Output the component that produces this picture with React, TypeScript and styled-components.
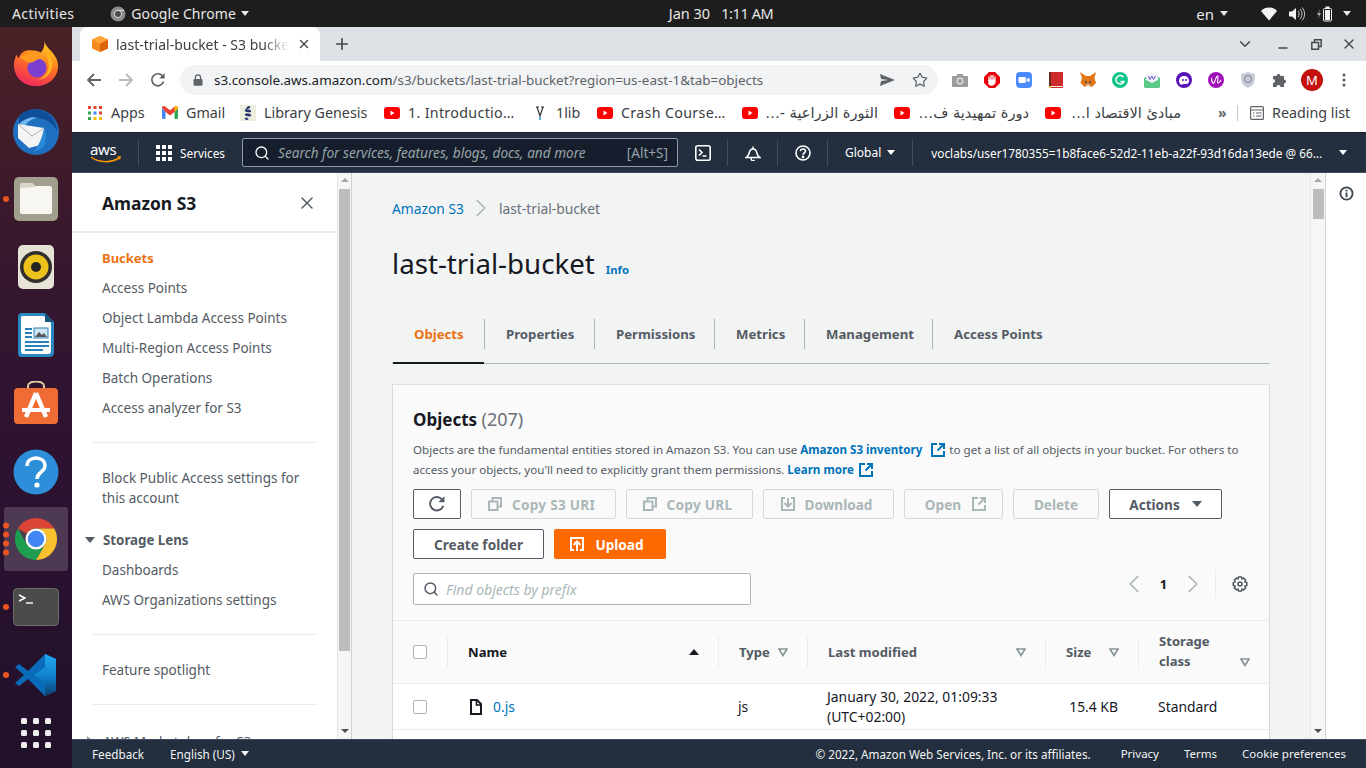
import React from 'react';
import styled, { createGlobalStyle } from 'styled-components';
import { ChevronDown, ChevronLeft, ChevronRight, Minus, Plus, Search, Star, X } from 'lucide-react';

const Global = createGlobalStyle`
  html, body { margin: 0; padding: 0; overflow: hidden; }
  body { font-family: "Noto Sans", "DejaVu Sans", sans-serif; }
  * { box-sizing: border-box; }
`;

const Screen = styled.div`
  width: 1366px;
  height: 768px;
  display: flex;
  flex-direction: column;
  overflow: hidden;
  background: #fff;
`;

/* ---------- gnome top bar ---------- */
const TopBar = styled.div`
  height: 27px;
  flex: none;
  background: #1d1d1d;
  color: #e8e8e8;
  font-size: 14px;
  display: grid;
  grid-template-columns: 1fr auto 1fr;
  align-items: center;
  padding: 0 12px;
`;
const TopLeft = styled.div`
  display: flex;
  align-items: center;
  letter-spacing: 0.1px;
`;
const Activities = styled.span`
  letter-spacing: 0.4px;
`;
const AppName = styled.div`
  display: flex;
  align-items: center;
  gap: 5px;
  margin-left: 36px;
`;
const TopCenter = styled.div`
  display: flex;
  gap: 11px;
  font-size: 14.5px;
  margin: -1px 0 0 76px;
`;
const ClockTime = styled.span`
  letter-spacing: -0.4px;
`;
const TopRight = styled.div`
  display: flex;
  align-items: center;
  justify-content: flex-end;
  margin-right: 3px;
`;
const EnLabel = styled.span`
  font-size: 15px;
`;
const Caret = styled.span<{ $size?: number; $color?: string; $dir?: 'up' | 'right' }>`
  display: inline-block;
  flex: none;
  width: 0;
  height: 0;
  border-left: ${(p) => p.$size ?? 4}px solid transparent;
  border-right: ${(p) => p.$size ?? 4}px solid transparent;
  border-top: ${(p) => (p.$size ?? 4) + 1}px solid ${(p) => p.$color ?? '#e8e8e8'};
  transform: ${(p) => (p.$dir === 'up' ? 'rotate(180deg)' : p.$dir === 'right' ? 'rotate(-90deg)' : 'none')};
`;
const Gap = styled.span<{ $w: number }>`
  width: ${(p) => p.$w}px;
  flex: none;
  display: inline-block;
`;

const Body = styled.div`
  flex: 1;
  display: flex;
  min-height: 0;
`;

/* ---------- ubuntu dock ---------- */
const Dock = styled.div`
  width: 72px;
  flex: none;
  background: linear-gradient(180deg, #4a2126 0%, #35162f 35%, #2a1230 65%, #22102a 100%);
  display: flex;
  flex-direction: column;
  align-items: center;
  padding-top: 2px;
`;
const DockSlot = styled.div<{ $active?: boolean; $h?: number }>`
  position: relative;
  width: 64px;
  height: ${(p) => p.$h ?? 68}px;
  flex: none;
  display: flex;
  align-items: center;
  justify-content: center;
  border-radius: 3px;
  background: ${(p) => (p.$active ? 'rgba(255,255,255,0.17)' : 'transparent')};
`;
const RunDots = styled.div`
  position: absolute;
  left: 0;
  top: 50%;
  transform: translateY(-50%);
  display: flex;
  flex-direction: column;
  gap: 3px;
  margin-left: -1px;
`;
const RunDot = styled.span`
  width: 6px;
  height: 6px;
  border-radius: 50%;
  background: #e95420;
`;

const Browser = styled.div`
  flex: 1;
  min-width: 0;
  display: flex;
  flex-direction: column;
`;

/* ---------- chrome ---------- */
const TabStrip = styled.div`
  height: 34px;
  flex: none;
  background: #dee1e6;
  display: flex;
  align-items: flex-end;
  padding-left: 8px;
  color: #45494e;
`;
const BrowserTab = styled.div`
  width: 240px;
  height: 34px;
  background: #fff;
  border-radius: 8px 8px 0 0;
  display: flex;
  align-items: center;
  padding: 0 9px 0 12px;
  gap: 8px;
`;
const TabTitle = styled.div`
  flex: 1;
  font-size: 14px;
  color: #3c4043;
  white-space: nowrap;
  overflow: hidden;
  -webkit-mask-image: linear-gradient(90deg, #000 85%, transparent 100%);
`;
const NewTab = styled.div`
  height: 34px;
  margin-left: 13px;
  display: flex;
  align-items: center;
`;
const WindowControls = styled.div`
  margin-left: auto;
  height: 34px;
  display: flex;
  align-items: center;
  margin-right: -2px;
`;
const WinBtn = styled.div<{ $w: number; $low?: boolean }>`
  width: ${(p) => p.$w}px;
  padding-top: ${(p) => (p.$low ? 8 : 0)}px;
  display: flex;
  justify-content: center;
  align-items: center;
`;
const Toolbar = styled.div`
  height: 36px;
  flex: none;
  background: #fff;
  display: flex;
  align-items: center;
  padding: 1px 0 0 6px;
`;
const NavBtn = styled.div`
  width: 32px;
  display: flex;
  justify-content: center;
  align-items: center;
`;
const Omnibox = styled.div`
  width: 758px;
  height: 30px;
  margin-left: 6px;
  background: #f1f3f4;
  border-radius: 15px;
  display: flex;
  align-items: center;
  padding: 0 2px 0 13px;
  font-size: 13.4px;
  color: #5f6368;
`;
const Host = styled.span`
  color: #202124;
  margin-left: 11px;
`;
const UrlRest = styled.span`
  flex: 1;
  white-space: nowrap;
`;
const OmniIcon = styled.span`
  width: 32px;
  display: flex;
  justify-content: center;
`;
const Extensions = styled.div`
  display: flex;
  margin-left: 6px;
`;
const ExtSlot = styled.div`
  width: 32px;
  display: flex;
  align-items: center;
  justify-content: center;
`;
const Avatar = styled.div`
  width: 22px;
  height: 22px;
  border-radius: 50%;
  background: #c5110e;
  color: #fff;
  font-size: 13px;
  display: flex;
  align-items: center;
  justify-content: center;
`;
const BookmarkBar = styled.div`
  height: 35px;
  flex: none;
  background: #fff;
  display: flex;
  align-items: center;
  padding: 0 0 4px 15px;
  font-size: 14.3px;
  color: #3c4043;
`;
const Bookmark = styled.div<{ $w: number }>`
  width: ${(p) => p.$w}px;
  flex: none;
  display: flex;
  align-items: center;
  gap: 8px;
  white-space: nowrap;
`;
const WideLabel = styled.span`
  letter-spacing: 0.3px;
`;
const ArabicLabel = styled.span<{ $w: number }>`
  width: ${(p) => p.$w}px;
  font-family: "DejaVu Sans", "Noto Sans", sans-serif;
  font-size: 14.6px;
  direction: rtl;
  text-align: right;
  overflow: hidden;
`;
const More = styled.div`
  width: 15px;
  margin-left: 37px;
  font-size: 14px;
  color: #5f6368;
  font-weight: 700;
`;
const BarSep = styled.div`
  width: 1px;
  height: 16px;
  background: #c6c8ca;
  margin: 0 12px 0 4px;
`;
const ReadingList = styled.div`
  display: flex;
  align-items: center;
  gap: 8px;
`;

/* ---------- aws console ---------- */
const AwsNav = styled.div`
  height: 41px;
  flex: none;
  background: #232f3e;
  border-top: 1px solid #1b2532;
  border-bottom: 1px solid #3c4a5b;
  display: flex;
  align-items: center;
  color: #fff;
  padding-left: 18px;
  font-size: 11.8px;
`;
const NavSep = styled.div<{ $l?: number; $r?: number }>`
  width: 1px;
  height: 26px;
  background: #414d5c;
  margin: 0 ${(p) => p.$r ?? 0}px 0 ${(p) => p.$l ?? 0}px;
`;
const ServicesBtn = styled.div`
  display: flex;
  align-items: center;
  gap: 8px;
`;
const NavSearch = styled.div`
  width: 436px;
  height: 29px;
  margin-left: 17px;
  background: #161e2d;
  border: 1px solid #8d9ba8;
  border-radius: 2px;
  display: flex;
  align-items: center;
  padding: 0 9px 0 11px;
  gap: 8px;
  color: #95a5a6;
  font-size: 13.6px;
`;
const NavSearchText = styled.span`
  flex: 1;
  font-style: italic;
  white-space: nowrap;
`;
const NavIcon = styled.div`
  width: 49px;
  display: flex;
  justify-content: center;
  align-items: center;
`;
const GlobalLabel = styled.span`
  font-size: 12px;
`;
const UserText = styled.div`
  width: 390px;
  white-space: nowrap;
  margin-left: 18px;
`;

const ConsoleArea = styled.div`
  flex: 1;
  display: flex;
  min-height: 0;
  background: #fff;
`;
const SideNav = styled.div`
  width: 265px;
  flex: none;
  overflow: hidden;
  background: #fff;
  color: #545b64;
  font-size: 13.5px;
`;
const SideHead = styled.div`
  height: 60px;
  border-bottom: 2px solid #eaeded;
  display: flex;
  align-items: center;
  justify-content: space-between;
  padding: 2px 20px 0 30px;
  margin-bottom: 10px;
`;
const SideTitle = styled.div`
  font-size: 17.4px;
  font-weight: 700;
  color: #16191f;
`;
const SideLink = styled.div<{ $active?: boolean }>`
  height: 30px;
  display: flex;
  align-items: center;
  padding-left: 30px;
  font-weight: ${(p) => (p.$active ? 700 : 400)};
  font-size: ${(p) => (p.$active ? 13 : 13.5)}px;
  color: ${(p) => (p.$active ? '#ec7211' : '#545b64')};
`;
const SideRule = styled.div<{ $t: number; $b: number }>`
  height: 1px;
  background: #eaeded;
  margin: ${(p) => p.$t}px 20px ${(p) => p.$b}px 20px;
`;
const SideBlock = styled.div`
  padding: 0 30px;
  line-height: 20px;
`;
const SideGroup = styled.div<{ $bold?: boolean }>`
  height: 31px;
  margin-top: 16px;
  display: flex;
  align-items: center;
  gap: 8px;
  padding-left: 13px;
  white-space: nowrap;
  font-size: 13.3px;
  font-weight: ${(p) => (p.$bold ? 700 : 400)};
`;
const ScrollTrack = styled.div<{ $w: number }>`
  width: ${(p) => p.$w}px;
  flex: none;
  background: #f5f6f6;
  border-left: 1px solid #e4e6e6;
  border-right: 1px solid #cfd2d2;
  display: flex;
  flex-direction: column;
  align-items: center;
  padding-top: 5px;
  position: relative;
`;
const ScrollUp = styled.span`
  width: 0;
  height: 0;
  border-left: 4px solid transparent;
  border-right: 4px solid transparent;
  border-bottom: 4px solid #a8a8a8;
`;
const ScrollDown = styled.span`
  position: absolute;
  bottom: 6px;
  left: 50%;
  margin-left: -4px;
  width: 0;
  height: 0;
  border-left: 4px solid transparent;
  border-right: 4px solid transparent;
  border-top: 4px solid #505050;
`;
const ScrollThumb = styled.div<{ $h: number }>`
  width: 11px;
  height: ${(p) => p.$h}px;
  background: #bdbdbd;
  margin-top: 7px;
`;

const Main = styled.div`
  flex: 1;
  min-width: 0;
  overflow: hidden;
  background: #f2f3f3;
  padding: 25px 40px 0 40px;
`;
const Crumbs = styled.div`
  display: flex;
  align-items: center;
  font-size: 13.8px;
  height: 20px;
  color: #687078;
`;
const CrumbArrow = styled(ChevronRight)`
  flex: none;
  margin: 0 3px 0 2px;
`;
const LinkText = styled.a`
  color: #0073bb;
  text-decoration: none;
`;
const PageHead = styled.div`
  display: flex;
  align-items: baseline;
  gap: 11px;
  margin-top: 24px;
  height: 43px;
`;
const PageTitle = styled.h1`
  margin: 0;
  font-size: 27.7px;
  font-weight: 400;
  color: #16191f;
  line-height: 42px;
`;
const InfoLink = styled.a`
  font-size: 11.3px;
  font-weight: 700;
  color: #0073bb;
`;
const TabList = styled.div`
  margin-top: 34px;
  height: 45px;
  display: flex;
  border-bottom: 1px solid #aab7b8;
  align-items: flex-start;
`;
const TabItem = styled.div<{ $active?: boolean; $first?: boolean; $w: number }>`
  width: ${(p) => p.$w}px;
  height: 45px;
  flex: none;
  font-size: 13.2px;
  font-weight: 700;
  white-space: nowrap;
  color: ${(p) => (p.$active ? '#ec7211' : '#545b64')};
  border-bottom: 2px solid ${(p) => (p.$active ? '#16191f' : 'transparent')};
  margin-left: ${(p) => (p.$first ? '1px' : '0')};
`;
const TabLabel = styled.div<{ $first?: boolean }>`
  height: 30px;
  display: flex;
  align-items: center;
  padding: 0 0 1px 21px;
  border-left: ${(p) => (p.$first ? 'none' : '1px solid #aab7b8')};
`;
const Card = styled.div`
  margin-top: 20px;
  background: #fafafa;
  border: 1px solid #e0e3e3;
  border-left-color: #d5dbdb;
  border-right-color: #d5dbdb;
  box-shadow: 0 1px 1px rgba(0, 59, 143, 0.1);
`;
const CardHead = styled.div`
  padding: 20px 20px 0 20px;
`;
const CardTitle = styled.div`
  font-size: 17px;
  line-height: 28px;
  font-weight: 700;
  color: #16191f;
`;
const Count = styled.span`
  font-weight: 400;
  font-size: 18px;
  color: #687078;
`;
const Desc = styled.div`
  margin-top: 6px;
  font-size: 11.6px;
  line-height: 20px;
  color: #545b64;
  margin-bottom: -1px;
`;
const DescLink = styled.a`
  color: #0073bb;
  font-weight: 700;
`;
const DescIcon = styled.span<{ $l: number }>`
  display: inline-flex;
  height: 14px;
  vertical-align: -3px;
  margin: 0 1px 0 ${(p) => p.$l}px;
`;
const BtnRow = styled.div`
  display: flex;
  gap: 10px;
  margin-top: 10px;
`;
const Btn = styled.div<{ $w: number; $off?: boolean; $primary?: boolean; $gap?: number; $ls?: number; $pl?: number; $pr?: number }>`
  width: ${(p) => p.$w}px;
  height: 30px;
  flex: none;
  display: flex;
  align-items: center;
  justify-content: center;
  gap: ${(p) => p.$gap ?? 10}px;
  font-size: 13.6px;
  font-weight: 700;
  letter-spacing: ${(p) => p.$ls ?? 0}px;
  border-radius: 2px;
  padding: 0 ${(p) => p.$pr ?? 0}px 0 ${(p) => p.$pl ?? 0}px;
  border: 1px solid ${(p) => (p.$primary ? '#ff6a00' : p.$off ? '#d5dbdb' : '#545b64')};
  background: ${(p) => (p.$primary ? '#ff6a00' : p.$off ? '#fafafa' : '#fff')};
  color: ${(p) => (p.$primary ? '#fff' : p.$off ? '#aab7b8' : '#545b64')};
`;
const FilterRow = styled.div`
  display: flex;
  align-items: center;
  justify-content: space-between;
  margin-top: 14px;
`;
const FilterBox = styled.div`
  width: 338px;
  height: 32px;
  background: #fff;
  border: 1px solid #aab7b8;
  border-radius: 2px;
  display: flex;
  align-items: center;
  gap: 7px;
  padding: 0 9px;
  font-size: 14px;
  font-style: italic;
  color: #aab7b8;
`;
const Pager = styled.div`
  display: flex;
  align-items: center;
  height: 30px;
  margin-top: -10px;
  margin-right: 1px;
`;
const PageNum = styled.div`
  width: 29px;
  text-align: center;
  font-size: 13px;
  font-weight: 700;
  color: #16191f;
`;
const PagerSep = styled.div`
  width: 1px;
  height: 30px;
  background: #eaeded;
  margin: 0 16px 0 7px;
`;
const ObjTable = styled.div`
  margin-top: 15px;
`;
const grid = '54px 271px 89px 238px 93px 1fr';
const HeadRow = styled.div`
  height: 64px;
  display: grid;
  grid-template-columns: ${grid};
  align-items: center;
  border-top: 1px solid #eaeded;
  border-bottom: 1px solid #eaeded;
  font-size: 13.1px;
  font-weight: 700;
  color: #545b64;
`;
const HeadCell = styled.div<{ $sorted?: boolean; $bottom?: boolean }>`
  height: 31px;
  border-left: 1px solid #eaeded;
  padding: 0 19px ${(p) => (p.$bottom ? 1 : 0)}px 20px;
  display: flex;
  align-items: ${(p) => (p.$bottom ? 'flex-end' : 'center')};
  justify-content: space-between;
  color: ${(p) => (p.$sorted ? '#16191f' : '#545b64')};
  gap: 6px;
`;
const CheckCell = styled.div`
  padding-left: 20px;
  display: flex;
  align-items: center;
`;
const CheckBox = styled.span`
  width: 14px;
  height: 14px;
  background: #fff;
  border: 1px solid #aab7b8;
  border-radius: 2px;
  display: block;
`;
const StorageHead = styled.div`
  line-height: 20px;
  margin-bottom: -4px;
`;
const DataRow = styled.div`
  height: 46px;
  display: grid;
  grid-template-columns: ${grid};
  align-items: center;
  background: #fff;
  border-bottom: 1px solid #eaeded;
  font-size: 13.9px;
  color: #16191f;
`;
const DataCell = styled.div<{ $right?: boolean; $l?: number }>`
  padding: 0 20px 0 ${(p) => p.$l ?? 20}px;
  line-height: 20px;
  display: flex;
  align-items: center;
  gap: 11px;
  white-space: nowrap;
  justify-content: ${(p) => (p.$right ? 'flex-end' : 'flex-start')};
`;
const DateText = styled.div`
  white-space: nowrap;
`;
const RowTail = styled.div`
  height: 40px;
  background: #fff;
`;
const InfoRail = styled.div`
  width: 40px;
  flex: none;
  background: #fff;
  display: flex;
  justify-content: center;
  padding-top: 13px;
`;
const Footer = styled.div`
  height: 29px;
  flex: none;
  background: #232f3e;
  border-top: 1px solid #3c4a5b;
  color: #f2f3f3;
  font-size: 11.7px;
  display: flex;
  align-items: center;
  padding: 0 20px 1px;
`;
const FooterLeft = styled.div`
  display: flex;
  align-items: center;
  gap: 26px;
  flex: 1;
`;
const Lang = styled.div`
  display: flex;
  align-items: center;
  gap: 6px;
`;
const FooterRight = styled.div`
  display: flex;
  gap: 25px;
  font-size: 11.5px;
`;
const Copyright = styled.span`
  margin-right: 5px;
  font-size: 11.7px;
`;

/* ---------- drawings ---------- */
const FirefoxIcon = () => (
  <svg width="46" height="46" viewBox="0 0 48 48">
    <defs>
      <linearGradient id="ff" x1="0.7" y1="0" x2="0.3" y2="1">
        <stop offset="0" stopColor="#ffd426" />
        <stop offset="0.45" stopColor="#ff7a1f" />
        <stop offset="1" stopColor="#f0255f" />
      </linearGradient>
    </defs>
    <path d="M33 1c1 6 5 8 9 13 3 4 5 8 5 13 0 12-10 21-23 21S1 39 1 26c0-4 1-8 3-11 0 2 1 3 2 4 1-4 4-7 8-8 6-1 11 0 15 2 3-3 4-7 4-12z" fill="url(#ff)" />
    <circle cx="25" cy="29" r="10" fill="#7b3fd0" />
    <path d="M7 18c5-3 10-6 17-4 4 1 7 3 8 7-4-3-8 0-11 2-3 1-6 1-8-1-2-1-4-2-6-4z" fill="#ff9a1f" />
    <path d="M33 10c6 4 9 11 8 18-1 7-7 13-15 14 6-3 11-8 11-15 0-6-1-12-4-17z" fill="#ffb31f" />
  </svg>
);
const ThunderbirdIcon = () => (
  <svg width="50" height="50" viewBox="0 0 50 50">
    <circle cx="25" cy="26" r="23" fill="#1f6fc0" />
    <path d="M8 10c8-9 24-9 32 0 4 5 6 10 6 15-5-8-11-13-21-13-7 0-12 3-17 9z" fill="#0f4f99" />
    <path d="M8 18c6-6 14-8 18-6-6 1-10 4-12 8z" fill="#6fb7ee" />
    <path d="M7 18l26 4v16L18 42 7 32z" fill="#f4f4f4" />
    <path d="M7 18l14 12 12-8" fill="none" stroke="#aab2bb" strokeWidth="1" />
    <path d="M33 22c3 5 3 12-1 20l-10 4c6-6 9-14 11-24z" fill="#2b8ad6" />
  </svg>
);
const FilesIcon = () => (
  <svg width="46" height="46" viewBox="0 0 46 46">
    <rect x="1" y="1" width="44" height="44" rx="5" fill="#a39f8e" />
    <path d="M7 9c0-1 1-2 2-2h10l3 3h15c1 0 2 1 2 2v24c0 1-1 2-2 2H9c-1 0-2-1-2-2z" fill="#f7f6f2" />
    <path d="M7 12V9c0-1 1-2 2-2h10l4 4-14 1z" fill="#d9d6c9" />
  </svg>
);
const RhythmIcon = () => (
  <svg width="38" height="46" viewBox="0 0 38 46">
    <rect x="1" y="1" width="36" height="44" rx="5" fill="#e6e2d6" />
    <circle cx="19" cy="23" r="16" fill="#32302d" />
    <circle cx="19" cy="23" r="12.5" fill="#eec21d" />
    <circle cx="19" cy="23" r="5" fill="#25231f" />
  </svg>
);
const WriterIcon = () => (
  <svg width="38" height="46" viewBox="0 0 38 46">
    <path d="M4 1h24l9 9v31c0 2-2 4-4 4H4c-2 0-3-2-3-4V5c0-2 1-4 3-4z" fill="#2b87c0" />
    <path d="M5 4h22l7 7v28c0 2-1 3-3 3H6c-1 0-2-1-2-3V5z" fill="#fff" />
    <path d="M28 1l9 9h-9z" fill="#18577d" />
    <path d="M8 17h7M8 21h7M8 25h7M8 30h24M8 34h24M8 38h18" stroke="#2a81b8" strokeWidth="2" />
    <rect x="17" y="16" width="14" height="10" fill="#cfe6f4" stroke="#2a81b8" />
    <path d="M18 25l4-5 3 3 2-2 3 4z" fill="#555" />
  </svg>
);
const SoftwareIcon = () => (
  <svg width="46" height="44" viewBox="0 0 46 44">
    <path d="M15 8V5c0-6 16-6 16 0v3" fill="none" stroke="#e6cfa6" strokeWidth="2" />
    <rect x="1" y="7" width="44" height="36" rx="4" fill="#ef6c34" />
    <path d="M23 12L13 36M23 12l10 24" stroke="#fff" strokeWidth="4.5" />
    <path d="M9 29h28" stroke="#fff" strokeWidth="4" />
  </svg>
);
const HelpIcon = () => (
  <svg width="46" height="46" viewBox="0 0 46 46">
    <circle cx="23" cy="23" r="22.5" fill="#2d8fd9" />
    <path d="M14 17c0-5 4-8 9-8s9 3 9 8c0 6-8 6-8 13" fill="none" stroke="#fff" strokeWidth="3.5" />
    <circle cx="24" cy="36" r="2.6" fill="#fff" />
  </svg>
);
const ChromeIcon = ({ size = 46 }: { size?: number }) => (
  <svg width={size} height={size} viewBox="0 0 48 48">
    <path d="M5 13A22 22 0 0 1 43 13H24A11 11 0 0 0 14.5 18.5Z" fill="#db4437" />
    <path d="M43 13A22 22 0 0 1 24 46L33.5 29.5A11 11 0 0 0 24 13Z" fill="#fbc02d" />
    <path d="M5 13L14.5 29.5A11 11 0 0 0 33.5 29.5L24 46A22 22 0 0 1 5 13Z" fill="#1e9e50" />
    <circle cx="24" cy="24" r="11" fill="#fff" />
    <circle cx="24" cy="24" r="8.6" fill="#4285f4" />
  </svg>
);
const TerminalIcon = () => (
  <svg width="46" height="38" viewBox="0 0 46 38">
    <rect x="0.5" y="0.5" width="45" height="37" rx="4" fill="#4b4b49" stroke="#6c6c6a" />
    <path d="M6 7l6 3-6 3" fill="none" stroke="#fff" strokeWidth="1.4" />
    <path d="M13 15h7" stroke="#fff" strokeWidth="1.4" />
  </svg>
);
const VsCodeIcon = () => (
  <svg width="44" height="44" viewBox="0 0 44 44">
    <defs>
      <linearGradient id="vs" x1="0" y1="0" x2="0" y2="1">
        <stop offset="0" stopColor="#24a9f2" />
        <stop offset="0.55" stopColor="#0f7fcb" />
        <stop offset="1" stopColor="#0a3f6b" />
      </linearGradient>
    </defs>
    <path d="M31 1l11 5v32l-11 5L14 26 5 33l-4-3 9-8-9-8 4-3 9 7z" fill="#0a6cb8" />
    <path d="M31 1l11 5v32l-11 5V30L20 22l11-8z" fill="url(#vs)" />
  </svg>
);
const DockGrid = () => (
  <svg width="32" height="32" viewBox="0 0 32 32" fill="#eee">
    {[0, 12, 24].flatMap((y) =>
      [0, 12, 24].map((x) => <rect key={`${x}-${y}`} x={x + 1} y={y + 1} width="6" height="6" rx="1.5" />),
    )}
  </svg>
);
const ChromeMono = () => (
  <svg width="16" height="16" viewBox="0 0 16 16">
    <circle cx="8" cy="8" r="7.5" fill="#8b8b8b" />
    <circle cx="8" cy="8" r="3.6" fill="#4a4a4a" stroke="#ddd" />
    <path d="M8 4.4h6" stroke="#ddd" />
  </svg>
);
const WifiIcon = () => (
  <svg width="16" height="14" viewBox="0 0 16 14">
    <path d="M0 4c4-4.6 12-4.6 16 0L8 13.5z" fill="#f2f2f2" />
  </svg>
);
const VolumeIcon = () => (
  <svg width="16" height="14" viewBox="0 0 16 14" fill="none">
    <path d="M0 4.5h3L7 1v12L3 9.5H0z" fill="#f2f2f2" />
    <path d="M9 4c1.4 1.6 1.4 4.4 0 6M11 2c2.6 2.8 2.6 7.2 0 10M13 .5c3.4 3.6 3.4 9.4 0 13" stroke="#c8c8c8" />
  </svg>
);
const BatteryIcon = () => (
  <svg width="16" height="16" viewBox="0 0 16 16">
    <path d="M3 3L0 9h2l-1 4 3-6H2z" fill="#a8a8a8" />
    <rect x="6.5" y="2.5" width="8" height="12.5" rx="1" fill="none" stroke="#f2f2f2" />
    <rect x="8.5" y="0.5" width="4" height="2" fill="#f2f2f2" />
    <rect x="8" y="4" width="5" height="10" fill="#f2f2f2" />
  </svg>
);
const S3Favicon = () => (
  <svg width="16" height="16" viewBox="0 0 16 16">
    <path d="M8 0l8 3.4v9L8 16l-8-3.6v-9z" fill="#f58a1f" />
    <path d="M8 7.4L16 3.4v9L8 16z" fill="#d9640b" />
    <path d="M8 0l8 3.4-8 4-8-4z" fill="#ffa53c" />
  </svg>
);
const BackIcon = ({ color }: { color: string }) => (
  <svg width="16" height="16" viewBox="0 0 16 16" fill="none" stroke={color} strokeWidth="1.8">
    <path d="M15 8H2M8 2L2 8l6 6" />
  </svg>
);
const ForwardIcon = () => (
  <svg width="16" height="16" viewBox="0 0 16 16" fill="none" stroke="#b9bbbe" strokeWidth="1.8">
    <path d="M1 8h13M8 2l6 6-6 6" />
  </svg>
);
const ReloadIcon = ({ color = '#5f6368', size = 16 }: { color?: string; size?: number }) => (
  <svg width={size} height={size} viewBox="0 0 16 16" fill="none">
    <path d="M13.6 9.6A6 6 0 1 1 12.4 3.8L14 5.5" stroke={color} strokeWidth="1.7" />
    <path d="M14.6 1v5.4H9.2z" fill={color} />
  </svg>
);
const LockIcon = () => (
  <svg width="10" height="12" viewBox="0 0 10 12">
    <path d="M2.4 5V3.4a2.6 2.6 0 0 1 5.2 0V5" fill="none" stroke="#5f6368" strokeWidth="1.2" />
    <rect x="0.5" y="5" width="9" height="6.8" rx="1" fill="#5f6368" />
  </svg>
);
const SendIcon = () => (
  <svg width="16" height="12" viewBox="0 0 16 12">
    <path d="M0 0l15 6L0 12l1-5 7-1-7-1z" fill="#5f6368" />
  </svg>
);
const CameraIcon = () => (
  <svg width="16" height="14" viewBox="0 0 16 14">
    <path d="M1 3h3.5l1-2h5l1 2H15c.5 0 1 .5 1 1v9c0 .5-.5 1-1 1H1c-.5 0-1-.5-1-1V4c0-.5.5-1 1-1z" fill="#9c9c9c" />
    <circle cx="8" cy="8" r="3.4" fill="#e8e8e8" />
    <circle cx="8" cy="8" r="2.2" fill="#9c9c9c" />
  </svg>
);
const StopHand = () => (
  <svg width="16" height="16" viewBox="0 0 16 16">
    <path d="M5 0h6l5 5v6l-5 5H5l-5-5V5z" fill="#e8000d" />
    <path d="M5 8V4.5M7 7V3M9 7V3M11 8V4.5M5 8l-.8 1M5 8v3c0 1 1 2 2.5 2S11 12 11 10V8z" stroke="#fff" strokeWidth="1.3" fill="#fff" />
  </svg>
);
const ZoomIcon = () => (
  <svg width="16" height="16" viewBox="0 0 16 16">
    <rect width="16" height="16" rx="4" fill="#4a8cff" />
    <rect x="2.5" y="5" width="7.5" height="6" rx="1.4" fill="#fff" />
    <path d="M10.5 7.5L13.5 5.4v5.2l-3-2.1z" fill="#fff" />
  </svg>
);
const RedBook = () => (
  <svg width="14" height="16" viewBox="0 0 14 16">
    <rect x="0" y="0" width="2.5" height="15" fill="#6b2b22" />
    <rect x="2" y="0" width="12" height="14" fill="#cf2a2a" />
    <rect x="2" y="14" width="12" height="1" fill="#eee" />
    <rect x="0" y="15" width="14" height="1" fill="#cf2a2a" />
    <path d="M0 14h2v2H0z" fill="#e8b92e" />
  </svg>
);
const FoxIcon = () => (
  <svg width="18" height="16" viewBox="0 0 18 16">
    <path d="M1 0l6 4h4l6-4-1.500 6 1.500 5-4 4-2-1H7.500l-2 1-4-4L3 6z" fill="#e2761b" />
    <path d="M6 9l2 1-1 2zM12 9l-2 1 1 2z" fill="#233447" />
    <path d="M7 12h4l-1 2H8z" fill="#d7c1b3" />
  </svg>
);
const GrammarlyIcon = () => (
  <svg width="16" height="16" viewBox="0 0 16 16">
    <circle cx="8" cy="8" r="8" fill="#12c48b" />
    <path d="M11.400 5a4.200 4.200 0 1 0 .6 4.400H8.400" fill="none" stroke="#fff" strokeWidth="1.500" />
  </svg>
);
const MailExt = () => (
  <svg width="16" height="16" viewBox="0 0 16 16">
    <rect y="5" width="16" height="11" rx="1.500" fill="#5cc98a" />
    <path d="M2 8V3l6-3 6 3v5l-6 3z" fill="#eef3f7" />
    <path d="M4.500 4l1.500 3.500L8 4l1.500 3.500L11.500 4" fill="none" stroke="#7a4ed8" strokeWidth="1" />
  </svg>
);
const GhostExt = () => (
  <svg width="16" height="16" viewBox="0 0 16 16">
    <circle cx="8" cy="8" r="8" fill="#5a12b8" />
    <path d="M3 9c0-3 2-5 5-5s5 2 5 5-2 3-5 3c-1 0-2 .5-3 1 0-1-2-1-2-4z" fill="#fff" />
    <circle cx="7" cy="8" r="1" fill="#5a12b8" />
    <circle cx="10" cy="8" r="1" fill="#5a12b8" />
  </svg>
);
const WExt = () => (
  <svg width="16" height="16" viewBox="0 0 16 16">
    <circle cx="8" cy="8" r="8" fill="#a012b8" />
    <path d="M3.500 6c0 4 1.500 6 2.500 5s2-7 3.500-7-1 7 .5 7 2-2 3-3" fill="none" stroke="#fff" strokeWidth="1.100" />
  </svg>
);
const ShieldExt = () => (
  <svg width="14" height="16" viewBox="0 0 14 16">
    <path d="M7 0l7 2c0 6 0 11-7 14C0 13 0 8 0 2z" fill="#c7ccd6" />
    <circle cx="7" cy="7" r="3.500" fill="none" stroke="#8f97a6" strokeWidth="1.400" />
  </svg>
);
const PuzzleIcon = () => (
  <svg width="15" height="15" viewBox="0 0 15 15">
    <path d="M0 4h3.500a2 2 0 1 1 4 0H11v3.500a2 2 0 1 1 0 4V15H7.500a2 2 0 1 0-4 0H0v-4a2 2 0 1 0 0-4z" fill="#5f6368" />
  </svg>
);
const DotsIcon = () => (
  <svg width="4" height="14" viewBox="0 0 4 14" fill="#5f6368">
    <circle cx="2" cy="2" r="1.600" />
    <circle cx="2" cy="7" r="1.600" />
    <circle cx="2" cy="12" r="1.600" />
  </svg>
);
const RestoreIcon = () => (
  <svg width="11" height="11" viewBox="0 0 11 11" fill="none" stroke="#45494e" strokeWidth="1.500">
    <path d="M3.500 .8h6.700v6.700H3.500z" />
    <path d="M.8 3.500h6.700v6.700H.8z" fill="#dee1e6" />
  </svg>
);
const AppsIcon = () => (
  <svg width="16" height="16" viewBox="0 0 16 16">
    {['#ea4335', '#ea4335', '#ea4335', '#34a853', '#4285f4', '#ea4335', '#34a853', '#fbbc04', '#fbbc04'].map((c, i) => (
      <rect key={i} x={1 + (i % 3) * 5.5} y={1 + Math.floor(i / 3) * 5.5} width="3" height="3" fill={c} />
    ))}
  </svg>
);
const GmailIcon = () => (
  <svg width="16" height="13" viewBox="0 0 16 13">
    <path d="M0 2v9.500c0 .8.700 1.500 1.500 1.500H3.500V6z" fill="#4285f4" />
    <path d="M16 2v9.500c0 .8-.7 1.500-1.500 1.500H12.500V6z" fill="#34a853" />
    <path d="M0 2c0-2 2-2.500 3.500-1.300L8 4.200 12.500.7C14-.5 16 0 16 2l-3.500 4L8 9.500 3.500 6z" fill="#ea4335" />
    <path d="M12.500 .7C14-.5 16 0 16 2l-3.500 4z" fill="#fbbc04" />
  </svg>
);
const LibIcon = () => (
  <svg width="16" height="16" viewBox="0 0 16 16">
    <rect width="16" height="16" fill="#eeeedd" />
    <path d="M8 1c2 0 3 1 2 2L5 5c4-1 7 0 6 2L5 9c4-1 7 0 6 2l-5 2c2 0 3 1 2 2-3 0-4-1-3-2l5-2c-3 0-6 0-5-2l5-2c-3 0-6 0-5-2z" fill="#22306b" />
  </svg>
);
const YouTubeIcon = () => (
  <svg width="16" height="12" viewBox="0 0 16 12">
    <rect width="16" height="12" rx="3" fill="#f00" />
    <path d="M6.500 3.500L10.500 6l-4 2.500z" fill="#fff" />
  </svg>
);
const VLibIcon = () => (
  <svg width="16" height="16" viewBox="0 0 16 16" fill="none">
    <path d="M4 2h3M9 2h3M5 2l3 9 3-9" stroke="#333" strokeWidth="1.200" />
    <path d="M8 12v3" stroke="#37a7e0" strokeWidth="1.600" />
  </svg>
);
const ListIcon = () => (
  <svg width="14" height="14" viewBox="0 0 14 14" fill="none" stroke="#5f6368" strokeWidth="1.200">
    <rect x=".6" y=".6" width="12.800" height="12.800" rx="1" />
    <path d="M.6 4h12.800M3 7h1.500M6 7h5.500M3 10h1.500M6 10h5.500" />
  </svg>
);
const AwsLogo = () => (
  <svg width="32" height="22" viewBox="0 0 32 22">
    <text x="0" y="13" fontFamily="Noto Sans, sans-serif" fontSize="15" fill="#fff" letterSpacing="-0.3">aws</text>
    <path d="M1 15c8 6 20 6 28 1" fill="none" stroke="#f90" strokeWidth="1.500" />
    <path d="M27 14.500l4-.5-1 4z" fill="#f90" />
  </svg>
);
const GridIcon = () => (
  <svg width="16" height="16" viewBox="0 0 16 16" fill="#fff">
    {[0, 6, 12].flatMap((y) => [0, 6, 12].map((x) => <rect key={`${x}${y}`} x={x} y={y} width="4" height="4" />))}
  </svg>
);
const CloudShellIcon = () => (
  <svg width="16" height="16" viewBox="0 0 16 16" fill="none" stroke="#fff" strokeWidth="1.600">
    <rect x=".8" y=".8" width="14.400" height="14.400" rx="2" />
    <path d="M4 4.500L7 7.500 4 10.500M7.500 11h4" />
  </svg>
);
const BellIcon = () => (
  <svg width="16" height="16" viewBox="0 0 16 16" fill="none" stroke="#fff" strokeWidth="1.500">
    <path d="M1 12.500c1.500-1 2.500-1.500 3-4 .4-2.500 1-4.500 4-4.500s3.600 2 4 4.500c.5 2.500 1.500 3 3 4z" />
    <path d="M8 1.500V4M6.500 13a1.500 1.500 0 0 0 3 2" />
  </svg>
);
const QuestionIcon = () => (
  <svg width="16" height="16" viewBox="0 0 16 16" fill="none" stroke="#fff" strokeWidth="1.600">
    <circle cx="8" cy="8" r="7" />
    <path d="M5.500 6.200C5.500 4.800 6.600 4 8 4s2.500.8 2.500 2.100C10.500 8 8 8 8 9.800" />
    <circle cx="8" cy="12" r=".6" fill="#fff" />
  </svg>
);
const ExternalIcon = ({ color = '#0073bb' }: { color?: string }) => (
  <svg width="14" height="14" viewBox="0 0 14 14" fill="none" stroke={color} strokeWidth="2">
    <path d="M6 1H1v12h12V8" />
    <path d="M8 1h5v5M13 1L6.500 7.500" />
  </svg>
);
const CopyIcon = () => (
  <svg width="14" height="14" viewBox="0 0 14 14" fill="none" stroke="#aab7b8" strokeWidth="2">
    <rect x="4.500" y="1" width="8.500" height="8.500" />
    <rect x="1" y="4.500" width="8.500" height="8.500" fill="#fafafa" />
  </svg>
);
const DownloadIcon = () => (
  <svg width="14" height="14" viewBox="0 0 14 14" fill="none" stroke="#aab7b8" strokeWidth="2">
    <path d="M4 1H1v12h12V1h-3" />
    <path d="M7 1v8M3.500 6L7 9.500 10.500 6" />
  </svg>
);
const UploadIcon = () => (
  <svg width="14" height="14" viewBox="0 0 14 14" fill="none" stroke="#fff" strokeWidth="2">
    <path d="M4 13H1V1h12v12h-3" />
    <path d="M7 14V5M3.500 8L7 4.500 10.500 8" />
  </svg>
);
const GearIcon = () => (
  <svg width="16" height="16" viewBox="0 0 16 16" fill="none" stroke="#545b64">
    <circle cx="8" cy="8" r="2" strokeWidth="1.600" />
    <path d="M6.500 1h3l.5 1.800 1.700-.7 2 2.100-.8 1.700L14.800 6.500v3l-1.900.6.800 1.700-2 2.100-1.700-.8-.5 1.900h-3l-.5-1.900-1.700.8-2-2.100.8-1.700-1.800-.6v-3l1.800-.6-.8-1.700 2-2.100 1.700.7z" strokeWidth="1.600" />
  </svg>
);
const FilterDown = () => (
  <svg width="10" height="9" viewBox="0 0 10 9" fill="none" stroke="#879596" strokeWidth="1.700">
    <path d="M1 1h8L5 7.500z" />
  </svg>
);
const FileIcon = () => (
  <svg width="12" height="16" viewBox="0 0 12 16" fill="none" stroke="#16191f" strokeWidth="2">
    <path d="M1 1h6l4 4v10H1z" />
    <path d="M6.500 1v5H11" strokeWidth="1.600" />
  </svg>
);
const InfoCircle = () => (
  <svg width="15" height="15" viewBox="0 0 16 16" fill="none" stroke="#414750" strokeWidth="2">
    <circle cx="8" cy="8" r="6.500" />
    <path d="M8 7v5M8 4v1.800" />
  </svg>
);

const sideTop = ['Access Points', 'Object Lambda Access Points', 'Multi-Region Access Points', 'Batch Operations', 'Access analyzer for S3'];
const tabs = [
  { label: 'Objects', w: 91 },
  { label: 'Properties', w: 110 },
  { label: 'Permissions', w: 120 },
  { label: 'Metrics', w: 90 },
  { label: 'Management', w: 128 },
  { label: 'Access Points', w: 130 },
];

const App = () => {
  return (
    <Screen>
      <Global />
      <TopBar>
        <TopLeft>
          <Activities>Activities</Activities>
          <AppName>
            <ChromeMono />
            Google Chrome
            <Caret />
          </AppName>
        </TopLeft>
        <TopCenter>
          <span>Jan 30</span>
          <ClockTime>1:11 AM</ClockTime>
        </TopCenter>
        <TopRight>
          <EnLabel>en</EnLabel>
          <Gap $w={6} />
          <Caret />
          <Gap $w={33} />
          <WifiIcon />
          <Gap $w={12} />
          <VolumeIcon />
          <Gap $w={12} />
          <BatteryIcon />
          <Gap $w={10} />
          <Caret />
        </TopRight>
      </TopBar>
      <Body>
        <Dock>
          <DockSlot><FirefoxIcon /></DockSlot>
          <DockSlot><ThunderbirdIcon /></DockSlot>
          <DockSlot>
            <RunDots><RunDot /></RunDots>
            <FilesIcon />
          </DockSlot>
          <DockSlot><RhythmIcon /></DockSlot>
          <DockSlot><WriterIcon /></DockSlot>
          <DockSlot><SoftwareIcon /></DockSlot>
          <DockSlot $h={70}><HelpIcon /></DockSlot>
          <DockSlot $active $h={64}>
            <RunDots><RunDot /><RunDot /><RunDot /><RunDot /></RunDots>
            <ChromeIcon />
          </DockSlot>
          <DockSlot $h={72}>
            <RunDots><RunDot /></RunDots>
            <TerminalIcon />
          </DockSlot>
          <DockSlot $h={64}>
            <RunDots><RunDot /></RunDots>
            <VsCodeIcon />
          </DockSlot>
          <DockSlot $h={52}><DockGrid /></DockSlot>
        </Dock>
        <Browser>
          <TabStrip>
            <BrowserTab>
              <S3Favicon />
              <TabTitle>last-trial-bucket - S3 bucket</TabTitle>
              <X size={14} strokeWidth={2.4} color="#45494e" />
            </BrowserTab>
            <NewTab><Plus size={18} strokeWidth={2.2} color="#45494e" /></NewTab>
            <WindowControls>
              <WinBtn $w={38}><ChevronDown size={18} strokeWidth={2} color="#45494e" /></WinBtn>
              <WinBtn $w={38} $low><Minus size={14} strokeWidth={2.2} color="#45494e" /></WinBtn>
              <WinBtn $w={28}><RestoreIcon /></WinBtn>
              <WinBtn $w={38}><X size={16} strokeWidth={2} color="#45494e" /></WinBtn>
            </WindowControls>
          </TabStrip>
          <Toolbar>
            <NavBtn><BackIcon color="#5f6368" /></NavBtn>
            <NavBtn><ForwardIcon /></NavBtn>
            <NavBtn><ReloadIcon /></NavBtn>
            <Omnibox>
              <LockIcon />
              <Host>s3.console.aws.amazon.com</Host>
              <UrlRest>/s3/buckets/last-trial-bucket?region=us-east-1&amp;tab=objects</UrlRest>
              <OmniIcon><SendIcon /></OmniIcon>
              <OmniIcon><Star size={16} strokeWidth={1.8} color="#5f6368" /></OmniIcon>
            </Omnibox>
            <Extensions>
              <ExtSlot><CameraIcon /></ExtSlot>
              <ExtSlot><StopHand /></ExtSlot>
              <ExtSlot><ZoomIcon /></ExtSlot>
              <ExtSlot><RedBook /></ExtSlot>
              <ExtSlot><FoxIcon /></ExtSlot>
              <ExtSlot><GrammarlyIcon /></ExtSlot>
              <ExtSlot><MailExt /></ExtSlot>
              <ExtSlot><GhostExt /></ExtSlot>
              <ExtSlot><WExt /></ExtSlot>
              <ExtSlot><ShieldExt /></ExtSlot>
              <ExtSlot><PuzzleIcon /></ExtSlot>
              <ExtSlot><Avatar>M</Avatar></ExtSlot>
              <ExtSlot><DotsIcon /></ExtSlot>
            </Extensions>
          </Toolbar>
          <BookmarkBar>
            <Bookmark $w={75}><AppsIcon />Apps</Bookmark>
            <Bookmark $w={78}><GmailIcon />Gmail</Bookmark>
            <Bookmark $w={144}><LibIcon />Library Genesis</Bookmark>
            <Bookmark $w={148}><YouTubeIcon /><WideLabel>1. Introductio…</WideLabel></Bookmark>
            <Bookmark $w={65}><VLibIcon />1lib</Bookmark>
            <Bookmark $w={145}><YouTubeIcon /><WideLabel>Crash Course…</WideLabel></Bookmark>
            <Bookmark $w={152}><YouTubeIcon /><ArabicLabel $w={112}>الثورة الزراعية -…</ArabicLabel></Bookmark>
            <Bookmark $w={151}><YouTubeIcon /><ArabicLabel $w={111}>دورة تمهيدية ف…</ArabicLabel></Bookmark>
            <Bookmark $w={136}><YouTubeIcon /><ArabicLabel $w={112}>مبادئ الاقتصاد ا…</ArabicLabel></Bookmark>
            <More>»</More>
            <BarSep />
            <ReadingList><ListIcon />Reading list</ReadingList>
          </BookmarkBar>
          <AwsNav>
            <AwsLogo />
            <NavSep $l={16} $r={17} />
            <ServicesBtn><GridIcon />Services</ServicesBtn>
            <NavSearch>
              <Search size={16} strokeWidth={2} color="#fff" />
              <NavSearchText>Search for services, features, blogs, docs, and more</NavSearchText>
              <span>[Alt+S]</span>
            </NavSearch>
            <NavIcon><CloudShellIcon /></NavIcon>
            <NavSep />
            <NavIcon><BellIcon /></NavIcon>
            <NavSep />
            <NavIcon><QuestionIcon /></NavIcon>
            <NavSep $r={17} />
            <GlobalLabel>Global</GlobalLabel>
            <Gap $w={6} />
            <Caret $color="#fff" />
            <NavSep $l={17} />
            <UserText>voclabs/user1780355=1b8face6-52d2-11eb-a22f-93d16da13ede @ 66...</UserText>
            <Gap $w={18} />
            <Caret $color="#fff" />
          </AwsNav>
          <ConsoleArea>
            <SideNav>
              <SideHead>
                <SideTitle>Amazon S3</SideTitle>
                <X size={20} strokeWidth={1.8} color="#545b64" />
              </SideHead>
              <SideLink $active>Buckets</SideLink>
              {sideTop.map((item) => (
                <SideLink key={item}>{item}</SideLink>
              ))}
              <SideRule $t={19} $b={25} />
              <SideBlock>Block Public Access settings for this account</SideBlock>
              <SideGroup $bold>
                <Caret $size={5} $color="#545b64" />
                Storage Lens
              </SideGroup>
              <SideLink>Dashboards</SideLink>
              <SideLink>AWS Organizations settings</SideLink>
              <SideRule $t={19} $b={20} />
              <SideLink>Feature spotlight</SideLink>
              <SideRule $t={19} $b={20} />
              <SideGroup>
                <Caret $size={5} $color="#879596" $dir="right" />
                AWS Marketplace for S3
              </SideGroup>
            </SideNav>
            <ScrollTrack $w={15}>
              <ScrollUp />
              <ScrollThumb $h={462} />
              <ScrollDown />
            </ScrollTrack>
            <Main>
              <Crumbs>
                <LinkText>Amazon S3</LinkText>
                <CrumbArrow size={30} strokeWidth={1.4} color="#aab7b8" />
                last-trial-bucket
              </Crumbs>
              <PageHead>
                <PageTitle>last-trial-bucket</PageTitle>
                <InfoLink>Info</InfoLink>
              </PageHead>
              <TabList>
                {tabs.map((tab, i) => (
                  <TabItem key={tab.label} $w={tab.w} $active={i === 0} $first={i === 0}>
                    <TabLabel $first={i === 0}>{tab.label}</TabLabel>
                  </TabItem>
                ))}
              </TabList>
              <Card>
                <CardHead>
                  <CardTitle>Objects <Count>(207)</Count></CardTitle>
                  <Desc>
                    Objects are the fundamental entities stored in Amazon S3. You can use <DescLink>Amazon S3 inventory</DescLink>{' '}
                    <DescIcon $l={6}><ExternalIcon /></DescIcon> to get a list of all objects in your bucket. For others to access your objects, you'll need to explicitly grant them permissions. <DescLink>Learn more</DescLink>{' '}
                    <DescIcon $l={2}><ExternalIcon /></DescIcon>
                  </Desc>
                  <BtnRow>
                    <Btn $w={48}><ReloadIcon color="#545b64" size={18} /></Btn>
                    <Btn $w={145} $off $ls={0.27} $pr={4}><CopyIcon />Copy S3 URI</Btn>
                    <Btn $w={127} $off $ls={0.27} $pr={4}><CopyIcon />Copy URL</Btn>
                    <Btn $w={131} $off $pr={4}><DownloadIcon />Download</Btn>
                    <Btn $w={99} $off $gap={11} $pl={4}>Open<ExternalIcon color="#aab7b8" /></Btn>
                    <Btn $w={86} $off>Delete</Btn>
                    <Btn $w={113} $gap={12}>Actions<Caret $size={5} $color="#545b64" /></Btn>
                  </BtnRow>
                  <BtnRow>
                    <Btn $w={131}>Create folder</Btn>
                    <Btn $w={112} $primary $gap={11} $pr={6}><UploadIcon />Upload</Btn>
                  </BtnRow>
                  <FilterRow>
                    <FilterBox>
                      <Search size={16} strokeWidth={2.2} color="#545b64" />
                      Find objects by prefix
                    </FilterBox>
                    <Pager>
                      <ChevronLeft size={30} strokeWidth={1.4} color="#aab7b8" />
                      <PageNum>1</PageNum>
                      <ChevronRight size={30} strokeWidth={1.4} color="#aab7b8" />
                      <PagerSep />
                      <GearIcon />
                    </Pager>
                  </FilterRow>
                </CardHead>
                <ObjTable>
                  <HeadRow>
                    <CheckCell><CheckBox /></CheckCell>
                    <HeadCell $sorted>Name<Caret $size={5} $color="#16191f" $dir="up" /></HeadCell>
                    <HeadCell>Type<FilterDown /></HeadCell>
                    <HeadCell>Last modified<FilterDown /></HeadCell>
                    <HeadCell>Size<FilterDown /></HeadCell>
                    <HeadCell $bottom>
                      <StorageHead>Storage<br />class</StorageHead>
                      <FilterDown />
                    </HeadCell>
                  </HeadRow>
                  <DataRow>
                    <CheckCell><CheckBox /></CheckCell>
                    <DataCell $l={23}><FileIcon /><LinkText>0.js</LinkText></DataCell>
                    <DataCell>js</DataCell>
                    <DataCell><DateText>January 30, 2022, 01:09:33<br />(UTC+02:00)</DateText></DataCell>
                    <DataCell $right>15.4 KB</DataCell>
                    <DataCell>Standard</DataCell>
                  </DataRow>
                  <RowTail />
                </ObjTable>
              </Card>
            </Main>
            <ScrollTrack $w={16}>
              <ScrollUp />
              <ScrollThumb $h={30} />
              <ScrollDown />
            </ScrollTrack>
            <InfoRail><InfoCircle /></InfoRail>
          </ConsoleArea>
          <Footer>
            <FooterLeft>
              Feedback
              <Lang>English (US)<Caret $color="#f2f3f3" /></Lang>
            </FooterLeft>
            <FooterRight>
              <Copyright>© 2022, Amazon Web Services, Inc. or its affiliates.</Copyright>
              <span>Privacy</span>
              <span>Terms</span>
              <span>Cookie preferences</span>
            </FooterRight>
          </Footer>
        </Browser>
      </Body>
    </Screen>
  );
};

export default App;
